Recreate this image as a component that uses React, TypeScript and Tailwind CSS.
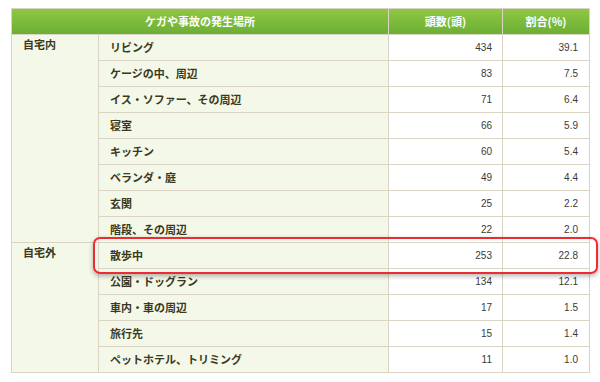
type Row = { place: string; count: number; ratio: string };

const inside: Row[] = [
  { place: "リビング", count: 434, ratio: "39.1" },
  { place: "ケージの中、周辺", count: 83, ratio: "7.5" },
  { place: "イス・ソファー、その周辺", count: 71, ratio: "6.4" },
  { place: "寝室", count: 66, ratio: "5.9" },
  { place: "キッチン", count: 60, ratio: "5.4" },
  { place: "ベランダ・庭", count: 49, ratio: "4.4" },
  { place: "玄関", count: 25, ratio: "2.2" },
  { place: "階段、その周辺", count: 22, ratio: "2.0" },
];

const outside: Row[] = [
  { place: "散歩中", count: 253, ratio: "22.8" },
  { place: "公園・ドッグラン", count: 134, ratio: "12.1" },
  { place: "車内・車の周辺", count: 17, ratio: "1.5" },
  { place: "旅行先", count: 15, ratio: "1.4" },
  { place: "ペットホテル、トリミング", count: 11, ratio: "1.0" },
];

const jp = { fontFamily: '"Noto Sans CJK JP", "Noto Sans", sans-serif' };
const num = { fontFamily: '"Liberation Sans", Arial, sans-serif' };

const cell = "border border-[#d9d4c4] h-[26px] p-0 align-middle";

function Group({ label, rows }: { label: string; rows: Row[] }) {
  return (
    <>
      {rows.map((r, i) => (
        <tr key={r.place}>
          {i === 0 && (
            <td rowSpan={rows.length} className={`${cell} bg-[#f3f8e9] align-top pl-[11px] pt-[4px] font-bold`}>
              {label}
            </td>
          )}
          <td className={`${cell} bg-[#f3f8e9] pl-[11px] font-bold`}>{r.place}</td>
          <td className={`${cell} bg-white text-right pr-[10px] text-[10px] text-[#3a3a3a]`} style={num}>
            {r.count}
          </td>
          <td className={`${cell} bg-white text-right pr-[11px] text-[10px] text-[#3a3a3a]`} style={num}>
            {r.ratio}
          </td>
        </tr>
      ))}
    </>
  );
}

export default function App() {
  return (
    <div className="w-[600px] h-[382px] bg-white overflow-hidden" style={jp}>
      <div className="relative pt-[8px] pl-[11px]">
        <table className="border-collapse table-fixed w-[578px] text-[11px] leading-none text-[#3b3820]">
          <colgroup>
            <col className="w-[87px]" />
            <col className="w-[290px]" />
            <col className="w-[114px]" />
            <col className="w-[87px]" />
          </colgroup>
          <thead>
            <tr className="bg-gradient-to-b from-[#8fc742] to-[#6aae35] text-white font-bold">
              <th colSpan={2} className="border border-[#d9d4c4] h-[26px] p-0 font-bold">
                ケガや事故の発生場所
              </th>
              <th className="border border-[#d9d4c4] border-l-[#a9d27b] h-[26px] p-0 font-bold">頭数(頭)</th>
              <th className="border border-[#d9d4c4] border-l-[#a9d27b] h-[26px] p-0 font-bold">割合(%)</th>
            </tr>
          </thead>
          <tbody>
            <Group label="自宅内" rows={inside} />
            <Group label="自宅外" rows={outside} />
          </tbody>
        </table>

        {/* highlight around 散歩中 */}
        <div className="absolute left-[93px] top-[237px] w-[505px] h-[37px] rounded-[7px] border-2 border-[#ee2a32] shadow-[0_2px_5px_rgba(0,0,0,0.3)] pointer-events-none" />
      </div>
    </div>
  );
}
